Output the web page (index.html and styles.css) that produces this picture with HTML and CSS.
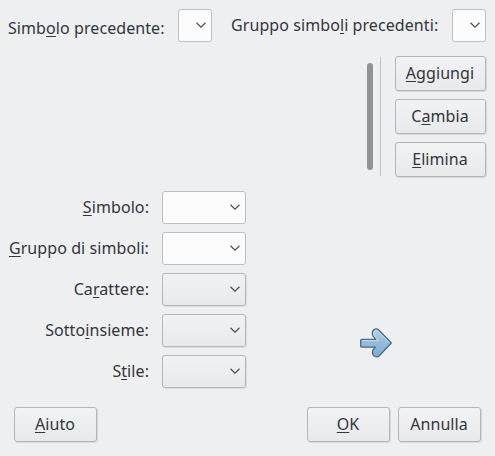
FILE: index.html
```html
<!DOCTYPE html>
<html lang="it">
<head>
<meta charset="utf-8">
<title>Simboli</title>
<link rel="stylesheet" href="styles.css">
</head>
<body>
<svg class="defs" width="0" height="0" aria-hidden="true">
  <symbol id="chevron" viewBox="0 0 10 6"><path d="M.5.8 5 5.2 9.5.8" fill="none" stroke="#4b4f53" stroke-width="1.2"/></symbol>
</svg>
<main class="dialog">
  <header class="top">
    <label class="old-symbol">Simb<u>o</u>lo precedente:</label>
    <div class="combo small"><svg class="chev"><use href="#chevron"/></svg></div>
    <label class="old-set">Gruppo simbo<u>l</u>i precedenti:</label>
    <div class="combo small"><svg class="chev"><use href="#chevron"/></svg></div>
  </header>
  <section class="middle">
    <div class="scrollbar"></div>
    <div class="separator"></div>
    <div class="actions">
      <button><u>A</u>ggiungi</button>
      <button>C<u>a</u>mbia</button>
      <button><u>E</u>limina</button>
    </div>
  </section>
  <section class="details">
    <div class="fields">
      <label><u>S</u>imbolo:</label>
      <div class="combo"><svg class="chev"><use href="#chevron"/></svg></div>
      <label><u>G</u>ruppo di simboli:</label>
      <div class="combo"><svg class="chev"><use href="#chevron"/></svg></div>
      <label>Ca<u>r</u>attere:</label>
      <div class="combo list"><svg class="chev"><use href="#chevron"/></svg></div>
      <label>Sotto<u>i</u>nsieme:</label>
      <div class="combo list"><svg class="chev"><use href="#chevron"/></svg></div>
      <label>S<u>t</u>ile:</label>
      <div class="combo list"><svg class="chev"><use href="#chevron"/></svg></div>
    </div>
    <svg class="arrow" width="32" height="30" viewBox="0 0 32 30">
      <defs>
        <linearGradient id="blue" x1="0" y1="0" x2="0" y2="1">
          <stop offset="0" stop-color="#b5d3e9"/><stop offset=".5" stop-color="#94bbda"/><stop offset="1" stop-color="#7eabd0"/>
        </linearGradient>
      </defs>
      <path d="M1.7 11.3Q.7 11.3.7 12.3V18.2Q.7 19.2 1.7 19.2H15.3L13 22Q12.2 23.2 12.6 25.6Q13.6 29 17 28.9Q18.2 28.8 19 28L31.3 15 19 2.2Q16.8.2 14.4 1.4Q12 3 12.4 6Q12.5 7.4 13.3 8.4L15.8 11.3Z" fill="url(#blue)" stroke="#466b86" stroke-width="1.3" stroke-linejoin="round"/>
      <path d="M2 12.6H18.6L14.3 7.6Q12.8 4.6 15 2.8Q16.6 2 18 3.2L29.2 14.6" fill="none" stroke="#c6deef" stroke-width="1"/>
    </svg>
  </section>
  <footer class="bottom">
    <button><u>A</u>iuto</button>
    <button class="ok"><u>O</u>K</button>
    <button>Annulla</button>
  </footer>
</main>
</body>
</html>
```
FILE: styles.css
```css
* { box-sizing: border-box; }

body {
  margin: 0;
  background: #eeeff1;
  color: #31363b;
  font: 16px/22px "Noto Sans", sans-serif;
  letter-spacing: .08px;
}

.defs { display: block; height: 0; }

.dialog {
  width: 495px;
  height: 456px;
  overflow: hidden;
  display: flex;
  flex-direction: column;
}

label { white-space: nowrap; }

u {
  text-decoration: underline 1px;
  text-underline-offset: 2px;
  text-decoration-skip-ink: none;
}

.top {
  display: flex;
  height: 56px;
  padding: 9px 9px 0 8px;
}

.old-symbol { width: 170px; padding-top: 8px; }
.old-set { margin-left: 19px; padding-top: 5px; width: 221px; }

.combo {
  display: flex;
  align-items: center;
  justify-content: flex-end;
  width: 84px;
  height: 33px;
  padding: 0 5px 1px 0;
  border: 1px solid #bcbebf;
  border-radius: 3px;
  background: #fcfcfc;
}

.combo.small { width: 34px; }

.combo.list {
  border-color: #b3b5b7;
  background: linear-gradient(#f1f2f3, #e8e9ea);
  box-shadow: 1px 1px 0 #dcddde;
}

.chev { width: 10px; height: 6px; }

button {
  width: 83px;
  height: 35px;
  padding: 0 1px 1px 0;
  border: 1px solid #b3b5b7;
  border-radius: 3px;
  background: linear-gradient(#f1f2f3, #e8e9eb);
  box-shadow: 1px 1px 0 #d7d8da;
  color: inherit;
  font: inherit;
  letter-spacing: inherit;
}

.middle {
  display: flex;
  justify-content: flex-end;
  height: 135px;
  padding-right: 9px;
}

.scrollbar {
  width: 6px;
  height: 107px;
  margin-top: 7px;
  border-radius: 3px;
  background: #909496;
}

.separator {
  width: 1px;
  height: 119px;
  margin: 1px 14px 0 7px;
  background: #bfc1c3;
}

.actions {
  display: flex;
  flex-direction: column;
  gap: 8px;
}

.actions button { width: 91px; }

.details {
  display: flex;
  height: 216px;
}

.fields {
  display: grid;
  grid-template-columns: 149px 84px;
  grid-auto-rows: 33px;
  gap: 8px 13px;
}

.fields label {
  text-align: right;
  padding-top: 5px;
}

.arrow { margin: 137px 0 0 114px; }

.bottom {
  display: flex;
  padding: 0 14px;
}

.ok { margin: 0 8px 0 auto; }
```
